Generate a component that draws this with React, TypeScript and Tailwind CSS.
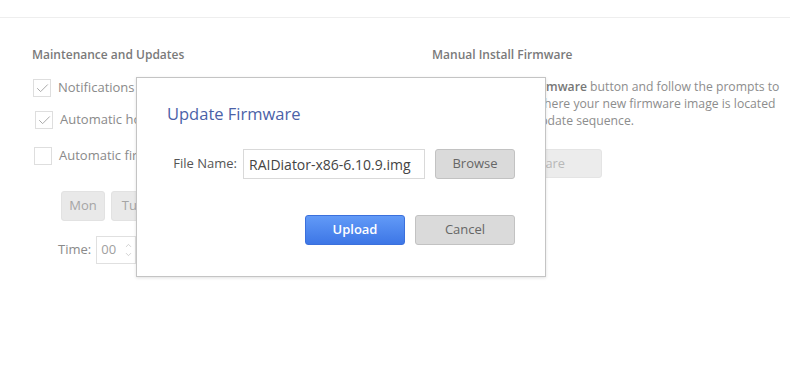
import { Check, ChevronDown, ChevronUp } from "lucide-react";

const CheckRow = ({ checked, label, offset }: { checked: boolean; label: string; offset: string }) => (
	<div className={`flex items-center h-[18px] ${offset}`}>
		<div className="w-[18px] h-[18px] border border-[#dedede] bg-white flex items-center justify-center">
			{checked && <Check size={15} strokeWidth={1.6} className="text-[#a9a9a9]" />}
		</div>
		<span className="ml-[7px] text-[13px] text-[#8a8a8a]">{label}</span>
	</div>
);

const Dialog = () => (
	<div className="absolute left-[136px] top-[77px] w-[410px] h-[200px] bg-white border border-[#c4c4c4] shadow-[0_1px_3px_rgba(0,0,0,0.12)] px-[30px] pt-[25px]">
		<h2 className="text-[16.5px] leading-[22px] text-[#4b62a8]">Update Firmware</h2>
		<div className="flex justify-end items-center mt-[24px] h-[30px]">
			<span className="text-[13px] text-[#555] mr-[6px]">File Name:</span>
			<div className="w-[182px] h-[30px] border border-[#d9d9d9] flex items-center pl-[5px] text-[14px] text-[#444]">
				RAIDiator-x86-6.10.9.img
			</div>
			<button className="ml-[10px] w-[80px] h-[30px] rounded-[3px] border border-[#c2c2c2] bg-[#dadada] text-[13px] text-[#666]">
				Browse
			</button>
		</div>
		<div className="flex justify-end mt-[36px] gap-[10px]">
			<button className="w-[100px] h-[30px] rounded-[3px] border border-[#3b70dc] bg-gradient-to-b from-[#629af7] to-[#3d76e6] text-[13px] font-semibold text-white">
				Upload
			</button>
			<button className="w-[100px] h-[30px] rounded-[3px] border border-[#c2c2c2] bg-[#dadada] text-[13px] text-[#666]">
				Cancel
			</button>
		</div>
	</div>
);

export default function App() {
	return (
		<div className="relative w-[790px] h-[368px] bg-white overflow-hidden font-['Open_Sans',sans-serif]">
			<div className="h-[18px] border-b border-[#eeeeee]" />
			<div className="flex pl-[32px] pt-[28px]">
				<div className="w-[400px] shrink-0">
					<h3 className="text-[12px] leading-[18px] font-semibold text-[#7a7a7a]">Maintenance and Updates</h3>
					<div className="mt-[15px] flex flex-col">
						<CheckRow checked label="Notifications" offset="ml-[1px]" />
						<CheckRow checked label="Automatic hotfix download" offset="ml-[3px] mt-[14px]" />
						<CheckRow checked={false} label="Automatic firmware download" offset="ml-[2px] mt-[18px]" />
					</div>
					<div className="flex gap-[6px] ml-[29px] mt-[26px]">
						<div className="w-[44px] h-[30px] rounded-[3px] bg-[#e9e9e9] border border-[#e2e2e2] flex items-center justify-center text-[13px] text-[#a5a5a5]">Mon</div>
						<div className="w-[44px] h-[30px] rounded-[3px] bg-[#e9e9e9] border border-[#e2e2e2] flex items-center justify-center text-[13px] text-[#a5a5a5]">Tue</div>
					</div>
					<div className="flex items-center ml-[26px] mt-[15px]">
						<span className="text-[13px] text-[#8a8a8a] mr-[5px]">Time:</span>
						<div className="w-[40px] h-[28px] border border-[#e0e0e0] flex items-center pl-[4px] text-[13px] text-[#a0a0a0]">
							<span className="flex-1">00</span>
							<div className="flex flex-col items-center mr-[2px] text-[#b0b0b0]">
								<ChevronUp size={9} strokeWidth={1.5} />
								<ChevronDown size={9} strokeWidth={1.5} />
							</div>
						</div>
					</div>
				</div>
				<div className="flex-1">
					<h3 className="text-[12px] leading-[18px] font-semibold text-[#7a7a7a]">Manual Install Firmware</h3>
					<p className="mt-[14px] text-[12.2px] leading-[17px] text-[#8d8d8d] whitespace-nowrap">
						<span className="tracking-[0.1px]">Click the </span>
						<span className="font-semibold text-[#777]">Browse Firmware</span> button and follow the prompts to
						<br />
						<span className="tracking-[-0.25px]">locate the location </span>where your new firmware image is located
						<br />
						<span className="tracking-[-0.25px]">and then start the </span>update sequence.
					</p>
					<button className="mt-[20px] w-[170px] h-[29px] pr-[8px] rounded-[3px] bg-[#ececec] border border-[#e4e4e4] text-[12.8px] text-[#b8b8b8]">
						Browse Firmware
					</button>
				</div>
			</div>
			<Dialog />
		</div>
	);
}
